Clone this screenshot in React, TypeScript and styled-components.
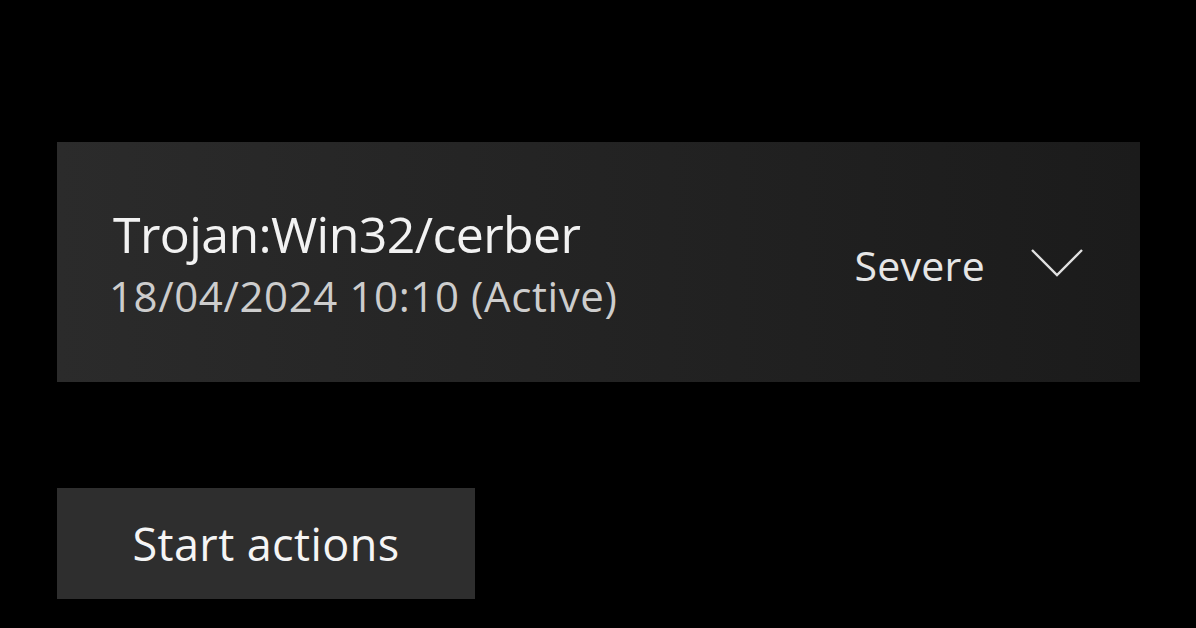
import React from "react";
import styled, { createGlobalStyle } from "styled-components";

const Global = createGlobalStyle`
  html, body { margin: 0; padding: 0; background: #000; }
  body { font-family: "Open Sans", "Noto Sans", sans-serif; }
`;

const Page = styled.div`
  width: 1196px;
  height: 628px;
  box-sizing: border-box;
  padding: 142px 56px 0 57px;
  display: flex;
  flex-direction: column;
  gap: 106px;
  background: #000;
`;

const Card = styled.div`
  height: 240px;
  box-sizing: border-box;
  display: flex;
  align-items: center;
  justify-content: space-between;
  padding: 0 57px 0 56px;
  background: linear-gradient(90deg, #2b2b2b 0%, #232323 50%, #1b1b1b 100%);
`;

const Info = styled.div`
  display: flex;
  flex-direction: column;
  margin-top: 6px;
`;

const Title = styled.div`
  font-size: 50px;
  line-height: 62px;
  color: #f2f2f2;
  letter-spacing: -0.6px;
`;

const Sub = styled.div`
  font-size: 42px;
  line-height: 62px;
  color: #cdcdcd;
  letter-spacing: 0.6px;
  margin-left: -4px;
`;

const Right = styled.div`
  display: flex;
  align-items: center;
  gap: 46px;
  margin-top: 6px;
`;

const Severity = styled.span`
  font-size: 41px;
  color: #e6e6e6;
  letter-spacing: 0.3px;
`;

const Chevron = styled.svg`
  width: 52px;
  height: 28px;
  display: block;
  margin-top: -4px;
`;

const ActionButton = styled.button`
  width: 418px;
  height: 111px;
  border: none;
  background: #2e2e2e;
  color: #f5f5f5;
  font-family: "Open Sans", "Noto Sans", sans-serif;
  font-size: 45px;
  letter-spacing: 0.4px;
  padding: 0;
  cursor: pointer;
`;

export default function App() {
  return (
    <>
      <Global />
      <Page>
        <Card>
          <Info>
            <Title>Trojan:Win32/cerber</Title>
            <Sub>18/04/2024 10:10 (Active)</Sub>
          </Info>
          <Right>
            <Severity>Severe</Severity>
            <Chevron viewBox="0 0 52 28">
              <path d="M1 1 L26 26 L51 1" fill="none" stroke="#e0e0e0" strokeWidth="2.4" />
            </Chevron>
          </Right>
        </Card>
        <div>
          <ActionButton>Start actions</ActionButton>
        </div>
      </Page>
    </>
  );
}
